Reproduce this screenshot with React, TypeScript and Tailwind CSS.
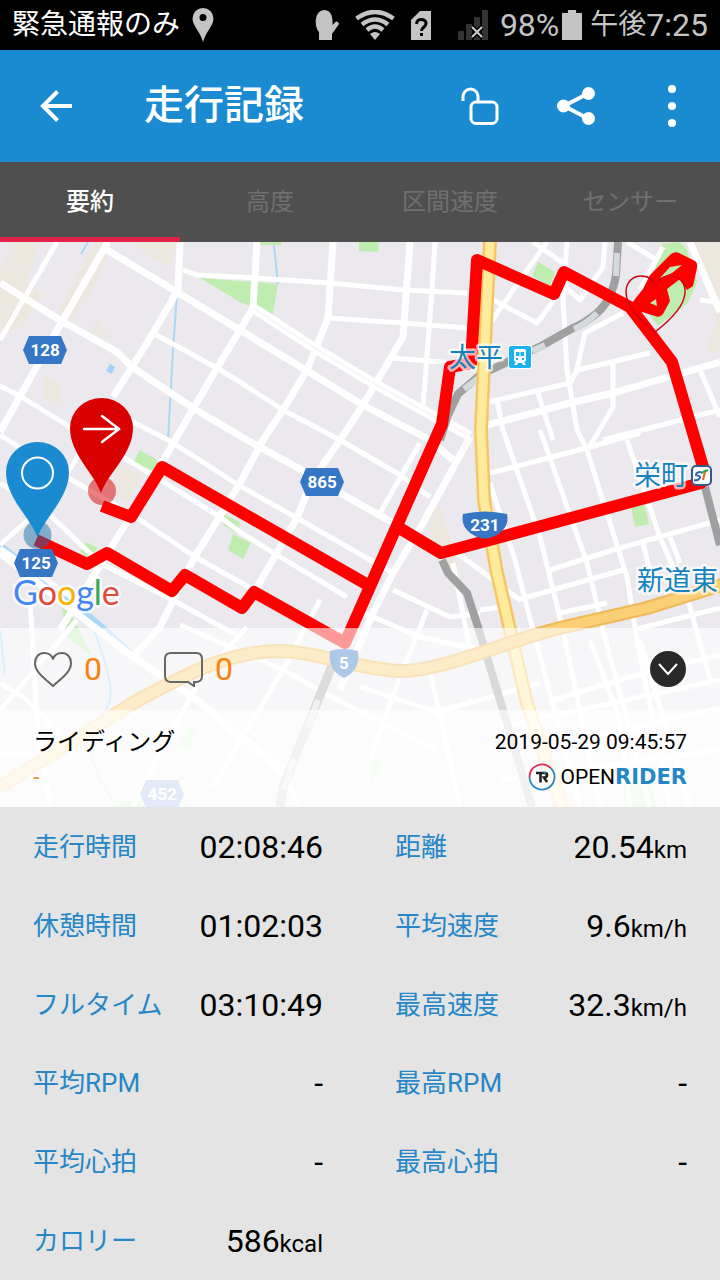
import type { ReactNode } from "react";

const minorRoads = [
  "M57 242L0 340", "M153 333L217 368L240 382L283 410L340 440L400 475L430 497",
  "M183 270L197 275L240 277L330 283L403 290L467 293", "M328 318L403 323L480 329", "M393 358L453 363",
  "M435 242L432 290L423 407", "M100 398L133 422L170 441L240 486L297 518L393 573",
  "M0 386L20 396L70 427L133 463L220 517L240 532L277 555L347 597", "M0 435L67 477L137 518L197 558L240 582L300 616",
  "M0 483L50 515L100 563L167 597L240 637", "M80 453L50 500L0 545", "M0 548L84 606",
  "M30 600L37 720L50 807", "M0 710L77 620", "M180 625L283 670L360 712L437 750", "M320 600L283 670L253 720L213 787",
  "M247 627L200 680L160 753L133 807", "M0 683L27 700L60 735", "M0 755L60 752L110 720", "M196 700L283 775L300 807",
  "M533 242L563 263", "M567 242L563 300L567 370L577 430L587 450L627 577L637 640L670 807",
  "M605 242L603 267L580 300L565 287", "M547 242L490 323", "M480 293L537 323L567 283", "M627 242L657 260",
  "M663 247L640 290", "M720 303L700 300", "M623 313L585 333L576 373", "M480 404L570 383L577 370L650 353",
  "M613 363L613 407L590 446", "M537 390L553 440", "M540 430L587 563L603 630L650 807", "M497 400L503 430L540 537L563 630L600 807",
  "M603 440L720 410", "M700 370L720 417", "M490 473L560 455L590 447L640 433", "M627 440L660 537L690 607L710 680",
  "M550 570L613 550L720 520", "M517 600L623 570", "M490 483L515 560L533 630L580 807", "M560 613L607 603",
  "M643 542L653 587", "M670 537L680 563", "M480 570L520 600", "M480 610L500 607", "M633 630L720 608",
  "M420 443L380 513", "M393 590L450 617L480 613", "M427 610L395 690L370 760", "M453 563L470 650", "M457 553L480 570",
  "M357 610L420 637L480 650", "M360 687L437 712L540 683", "M430 672L450 760L460 807", "M553 700L630 677L720 655",
  "M500 727L580 710L720 680", "M540 750L720 708", "M500 780L560 772L720 750", "M590 640L620 720L630 807", "M640 640L690 807",
];

const mainRoads = [
  "M108 242L60 325L0 432", "M0 283L63 322L117 352L132 367L193 408L240 436L300 469L340 493L397 525",
  "M107 250L177 292L243 332L363 405L430 440L453 460", "M180 242L178 290L153 333L132 367L113 397",
  "M257 242L253 308L240 330L217 368L175 440L147 490L120 533L60 630",
  "M333 242L328 318L307 370L283 410L263 440L240 483L193 560L160 627L133 657",
  "M410 242L403 337L363 405L340 440L312 480L297 518L257 587", "M690 242L720 312",
  "M480 427L570 403L613 393L720 362", "M0 553L80 616L133 657L167 680L197 700L283 770",
  "M470 437L423 523L393 573L373 613L340 690",
];

const greens = [
  "M200 278L240 281L278 284L273 314L252 307L240 302Z", "M260 242h21v3h-21z", "M359 242h20l-1 10l-19 -1z",
  "M140 450l10 6l6 3l4 14l-27 -10z", "M233 534l18 9l-8 16l-15 -9z", "M86 542l12 6l-9 10l-9 -6z", "M224 514l16 8l-2 12l-15 -9z",
  "M631 506l13 -4l5 22l-14 3z", "M538 262l17 10l-5 14l-18 -10z", "M662 244L680 242L687 250L697 282L688 303L658 326L644 308Z",
  "M62 608l8 4l22 44l-24 -18z", "M190 724l6 4l-6 22l-12 -4z", "M370 762l14 -4l-12 26z", "M622 780h28l6 27h-30z", "M120 802l20 -2l4 7h-26z",
];

const beige = [
  "M95 242h18l-22 50l-24 34l-8 -14z", "M130 242h48l-10 26z", "M0 270l15 -28h26l-16 40l18 12l-20 32l-22 8z", "M98 318l10 20l-18 -4z",
  "M45 374l15 12l2 20l-18 -8z", "M118 462l24 14l-14 26l-16 -10z", "M694 242h26v110h-14l10 -30z", "M430 512l10 -4l12 34l6 24l-14 12l-4 -20l-10 -30z",
];

function Hexagon({ x, y, label }: { x: number; y: number; label: string }) {
  return (
    <g transform={`translate(${x} ${y})`}>
      <path d="M-16 -14H16L22 0L16 14H-16L-22 0Z" fill="#3576c5" />
      <text y="6" textAnchor="middle" fill="#fff" fontSize="17" fontWeight="700">{label}</text>
    </g>
  );
}

function PlaceLabel({ x, y, children }: { x: number; y: number; children: string }) {
  return (
    <text x={x} y={y} fontSize="27" fill="#1583bd" stroke="#fff" strokeOpacity="0.7" strokeWidth="5" strokeLinejoin="round" paintOrder="stroke">
      {children}
    </text>
  );
}

function RouteMap() {
  return (
    <svg viewBox="0 242 720 565" preserveAspectRatio="xMidYMid slice" role="img" aria-label="地図" className="col-start-1 row-start-1 block w-full font-[Roboto,'Noto_Sans_CJK_JP',sans-serif]">
      <rect x="0" y="242" width="720" height="565" fill="#ebe9ed" />
      {beige.map((d) => <path key={d} d={d} fill="#ece8df" />)}
      {greens.map((d) => <path key={d} d={d} fill="#bfedb0" />)}
      <path d="M110 364l5 3l-3 7l-6 -3z" fill="#a1d3fb" />
      <g fill="none" stroke="#a9d8f7">
        <path d="M177 294L173 350L168 440M274 245L278 284M88 242l-7 12" strokeWidth="2" />
        <path d="M0 545L40 576L100 625L130 652" strokeWidth="6" />
        <path d="M130 652L170 682L220 718L260 743M90 620Q118 690 108 705L90 747Q92 770 113 800M0 630L5 674" strokeWidth="2" />
      </g>
      <g fill="none" stroke="#fff" strokeLinejoin="round">
        {minorRoads.map((d) => <path key={d} d={d} strokeWidth="5" />)}
        {mainRoads.map((d) => <path key={d} d={d} strokeWidth="7" />)}
        <path d="M253 308L313 347L373 383L470 436" strokeWidth="10" />
      </g>
      <path d="M253 308L313 347L373 383L470 436" fill="none" stroke="#f0eef2" strokeWidth="1" />

      <g fill="none" strokeLinejoin="round">
        <path d="M618 242L616 275Q612 300 597 313Q585 323 573 328L543 345L480 375L458 394L448 415L440 440M442 560L448 573L467 593L478 627L503 710L532 807M705 487L720 545" stroke="#9fa1a1" strokeWidth="8" />
        <path d="M333 663L310 720L283 787L280 807" stroke="#a7a9a9" strokeWidth="9" />
        <path d="M617 253L616 276M597 313Q587 323 574 329M545 345L532 351M480 377L464 389M318 700L308 727M294 759L283 790" stroke="#d5dadd" strokeWidth="6" />
      </g>
      <g fill="none" strokeLinejoin="round">
        <path d="M490 242L487 300L481 430L484 500L497 573L510 630L527 703L562 807" stroke="#f7c566" strokeWidth="14" />
        <path d="M490 242L487 300L481 430L484 500L497 573L510 630L527 703L562 807" stroke="#ffeb9c" strokeWidth="9" />
        <path d="M0 787L133 703C190 672 230 651 280 651C320 652 350 668 400 671C440 672 500 643 560 628L647 608L725 584" stroke="#efb958" strokeWidth="14" />
        <path d="M0 787L133 703C190 672 230 651 280 651C320 652 350 668 400 671C440 672 500 643 560 628L647 608L725 584" stroke="#fbcf76" strokeWidth="10" />
      </g>

      <g fill="none" stroke="#f00" strokeWidth="12" strokeLinejoin="round">
        <path d="M36 540L87 564L107 553L172 591L185 575L242 608L254 592L345 643L442 424L450 367L471 363L477 260L554 294L564 272L630 307L672 362L706 477L701 483L441 553L401 529" />
        <path d="M102 506L131 517L162 467L368 585" />
      </g>
      <path fill="#f00" fillRule="evenodd" d="M628 310L635 299L643 289L650 275L671 254Q675 251 679 253L695 261Q698 263 697 268L693 286L687 290L680 279L667 289L670 301L663 314Q660 318 655 316L642 312L634 313ZM650 303L657 306L656 299ZM660 278L672 273L682 265L670 267Z" />
      <path d="M655 332C643 322 626 308 626 292C626 282 633 276 641 276C649 276 655 281 656 286C657 281 663 276 670 276C679 276 686 283 685 293C684 308 668 322 655 332Z" fill="none" stroke="#d40012" strokeWidth="1.5" />

      <PlaceLabel x={449} y={367}>太平</PlaceLabel>
      <PlaceLabel x={634} y={485}>栄町</PlaceLabel>
      <PlaceLabel x={637} y={590}>新道東</PlaceLabel>
      <g transform="translate(509 346)">
        <rect x="-1" y="-1" width="24" height="24" rx="3" fill="#fff" />
        <rect width="22" height="22" rx="2" fill="#19b1ef" />
        <path d="M7 3H15Q17 3 17 5V14Q17 16 15 16L17 19H14L13 17H9L8 19H5L7 16Q5 16 5 14V5Q5 3 7 3Z" fill="#fff" />
        <path d="M7 6h3.500v4H7zM11.500 6H15v4h-3.500zM7 12h2v2H7zM13 12h2v2h-2z" fill="#19b1ef" />
      </g>
      <g transform="translate(691 465)">
        <rect x="1" y="1" width="19" height="19" rx="4" fill="#fff" stroke="#3c5688" strokeWidth="2" />
        <path d="M10 7Q5 7 5 10Q10 11 9 13Q7 16 3 15" fill="none" stroke="#3465b0" strokeWidth="2" />
        <path d="M10 8L17 5" stroke="#2ba24a" strokeWidth="2" />
        <path d="M14 7L12 15" stroke="#e36a22" strokeWidth="2" />
      </g>

      <Hexagon x={45} y={350} label="128" />
      <Hexagon x={322} y={482} label="865" />
      <Hexagon x={162} y={794} label="452" />
      <g fill="#3576c5">
        <path d="M463 514Q485 509 507 514Q510 528 495 536Q485 541 475 536Q460 528 463 514Z" />
        <path d="M330 651Q344 647 358 651Q361 670 344 678Q327 670 330 651Z" />
      </g>
      <g fill="#fff" fontSize="17" fontWeight="700" textAnchor="middle">
        <text x="485" y="531">231</text>
        <text x="344" y="669">5</text>
      </g>

      <circle cx="102" cy="491" r="14" fill="#d90000" fillOpacity="0.5" />
      <path d="M101 493C94 473 70 454 70 428A31.500 30 0 0 1 133 428C133 454 108 473 101 493Z" fill="#d90000" />
      <path d="M84 429H119M102 416L119 429L102 442" fill="none" stroke="#fff" strokeWidth="2.500" strokeLinecap="round" />
      <circle cx="37.500" cy="535" r="14" fill="#1a6fa8" fillOpacity="0.5" />
      <path d="M37.500 537C30 517 6 498 6 472A31.500 30 0 0 1 69 472C69 498 45 517 37.500 537Z" fill="#1a8bd0" />
      <circle cx="37.500" cy="473" r="15.500" fill="none" stroke="#fff" strokeWidth="2" />
      <Hexagon x={36} y={563} label="125" />
      <text x="13" y="605" fontSize="34" stroke="#fff" strokeOpacity="0.7" strokeWidth="5" strokeLinejoin="round" paintOrder="stroke" className="font-[Lato,sans-serif]">
        <tspan fill="#4285f4">G</tspan><tspan fill="#dd4b3e">o</tspan><tspan fill="#f4b400">o</tspan><tspan fill="#4285f4">g</tspan><tspan fill="#34a853">l</tspan><tspan fill="#dd4b3e">e</tspan>
      </text>
    </svg>
  );
}

function StatusBar() {
  return (
    <div className="flex h-[50px] items-center bg-black px-3 text-[28px] text-[#c4c4c4]">
      <span className="text-white">緊急通報のみ</span>
      <svg viewBox="0 0 22 34" className="ml-3 h-[34px] w-[22px]" aria-hidden="true">
        <path fillRule="evenodd" fill="currentColor" d="M11 0A10.500 10.500 0 0 1 21.500 10.500C21.500 18 14 23 11 34C8 23 .5 18 .5 10.500A10.500 10.500 0 0 1 11 0ZM11 6a3.500 3.500 0 1 0 0 7a3.500 3.500 0 0 0 0-7Z" />
      </svg>
      <div className="ml-auto flex items-center">
        <svg viewBox="0 0 24 30" className="h-[30px] w-6" aria-hidden="true">
          <path fill="currentColor" d="M4 30V22C-1 17 -1 1 9 0C16 0 18 6 17.500 15L21 11.500Q24 12 24 14L17 24V30Z" />
        </svg>
        <svg viewBox="0 0 40 30" className="ml-4 h-[30px] w-10" aria-hidden="true">
          <g fill="none" stroke="currentColor" strokeWidth="4.500">
            <path d="M1.500 8.500Q20 -4.500 38.500 8.500" />
            <path d="M7 14.500Q20 4.500 33 14.500" />
            <path d="M12 20Q20 13 28 20" />
          </g>
          <path d="M15 24Q20 20 25 24L20 30Z" fill="currentColor" />
        </svg>
        <svg viewBox="0 0 20 29" className="ml-4 h-[29px] w-5" aria-hidden="true">
          <path d="M9 0H20V29H0V9Z" fill="currentColor" />
          <path d="M5.500 13Q6 8.500 10 8.500Q15 8.500 15 12.500Q15 14.500 12.500 16.500Q10.500 18 10.500 20M10.500 22V25" fill="none" stroke="#000" strokeWidth="3" />
        </svg>
        <svg viewBox="0 0 30 30" className="ml-[27px] h-[30px] w-[30px]" aria-hidden="true">
          <path d="M0 21h6v9H0zM8 14h6v16H8zM16 7h6v23h-6zM24 0h6v30h-6z" fill="#333" />
          <path d="M14 17L24 27M24 17L14 27" stroke="#000" strokeWidth="5" />
          <path d="M14 17L24 27M24 17L14 27" stroke="#ccc" strokeWidth="2" />
        </svg>
        <span className="ml-3 text-[32px]">98%</span>
        <svg viewBox="0 0 20 30" className="ml-[3px] h-[30px] w-5" aria-hidden="true">
          <path d="M6 0h8v3h6v27H0V3h6z" fill="currentColor" />
        </svg>
        <span className="ml-2 flex items-center">午後<span className="text-[32px]">7:25</span></span>
      </div>
    </div>
  );
}

function IconButton({ label, children }: { label: string; children: ReactNode }) {
  return (
    <button type="button" aria-label={label} className="flex h-full w-24 items-center justify-center">
      {children}
    </button>
  );
}

function AppBar() {
  return (
    <header className="flex h-28 items-center bg-[#1a8bd0] text-white">
      <button type="button" aria-label="戻る" className="flex h-full w-28 items-center justify-center">
        <svg viewBox="0 0 32 32" className="size-8" fill="none" stroke="currentColor" strokeWidth="4" aria-hidden="true">
          <path d="M32 16H3M17.500 1.500L3 16L17.500 30.500" />
        </svg>
      </button>
      <h1 className="ml-8 flex-1 text-[40px] leading-none font-medium">走行記録</h1>
      <IconButton label="ロック解除">
        <svg viewBox="0 0 38 38" className="size-[38px]" fill="none" stroke="currentColor" strokeWidth="3" aria-hidden="true">
          <path d="M2 14V9.500A7.500 7.500 0 0 1 17 9.500V15" />
          <rect x="10" y="15" width="26" height="21.500" rx="5" />
        </svg>
      </IconButton>
      <IconButton label="共有">
        <svg viewBox="0 0 38 38" className="size-[38px]" fill="currentColor" aria-hidden="true">
          <path d="M31 6.500L7 19L31 31.500" fill="none" stroke="currentColor" strokeWidth="4" />
          <circle cx="6.500" cy="19" r="6.500" /><circle cx="31.500" cy="6.500" r="6.500" /><circle cx="31.500" cy="31.500" r="6.500" />
        </svg>
      </IconButton>
      <IconButton label="メニュー">
        <svg viewBox="0 0 8 42" className="h-[42px] w-2" fill="currentColor" aria-hidden="true">
          <circle cx="4" cy="4" r="4" /><circle cx="4" cy="21" r="4" /><circle cx="4" cy="38" r="4" />
        </svg>
      </IconButton>
    </header>
  );
}

function Tabs() {
  return (
    <nav role="tablist" className="grid h-20 grid-cols-4 bg-[#4f4f4f] text-2xl leading-none text-[#707070]">
      <button role="tab" aria-selected="true" type="button" className="border-b-5 border-[#e02247] pt-[5px] font-medium text-white">要約</button>
      {["高度", "区間速度", "センサー"].map((t) => (
        <button key={t} role="tab" aria-selected="false" type="button">{t}</button>
      ))}
    </nav>
  );
}

function RideInfo() {
  return (
    <div className="z-10 col-start-1 row-start-1 self-end">
      <div className="flex h-[82px] items-center bg-white/60 px-[34px] text-[32px] text-[#f5830f]">
        <button type="button" className="flex items-center gap-3">
          <svg viewBox="0 0 38 35" className="h-[35px] w-[38px]" fill="none" stroke="#666" strokeWidth="2" strokeLinejoin="round" aria-label="いいね">
            <path d="M19 34C10 26 1 20 1 11C1 5 5 1 10 1C15 1 18 4 19 7C20 4 23 1 28 1C33 1 37 5 37 11C37 20 28 26 19 34Z" />
          </svg>
          <span>0</span>
        </button>
        <button type="button" className="ml-[62px] flex items-center gap-3">
          <svg viewBox="0 0 39 35" className="h-[35px] w-[39px]" fill="none" stroke="#666" strokeWidth="2" aria-label="コメント">
            <path d="M7 1H32Q38 1 38 7V24Q38 30 32 30H30V34L24 30H7Q1 30 1 24V7Q1 1 7 1Z" />
          </svg>
          <span>0</span>
        </button>
        <button type="button" aria-label="閉じる" className="ml-auto flex size-9 items-center justify-center rounded-full bg-[#292929]">
          <svg viewBox="0 0 20 12" className="h-3 w-5" fill="none" stroke="#fff" strokeWidth="2" aria-hidden="true"><path d="M1 1L10 11L19 1" /></svg>
        </button>
      </div>
      <div className="flex h-[97px] justify-between bg-white/85 px-[33px] py-4 text-black">
        <div>
          <p className="text-2xl leading-8">ライディング</p>
          <p className="mt-1 text-2xl leading-[30px] text-[#f0963c]">-</p>
        </div>
        <div className="flex flex-col items-end">
          <time dateTime="2019-05-29T09:45:57" className="text-[21px] leading-8">2019-05-29 09:45:57</time>
          <div className="mt-1 flex items-center text-[21px] leading-[30px]">
            <svg viewBox="0 0 28 28" className="mr-1 size-7" fill="none" aria-hidden="true">
              <path d="M1.500 14A12.500 12.500 0 0 1 22.800 5.200" stroke="#e02b52" strokeWidth="1.800" />
              <path d="M22.800 5.200A12.500 12.500 0 1 1 1.500 14" stroke="#2587c4" strokeWidth="1.800" />
              <path d="M8 10H17Q19 10 19 12Q19 14.500 16 14.500L19 19" stroke="#222" strokeWidth="2.600" />
              <path d="M12.500 10V19.500" stroke="#222" strokeWidth="2.600" />
              <path d="M15 9L18 10" stroke="#2587c4" strokeWidth="1.500" />
            </svg>
            <span>OPEN</span>
            <span className="font-['DejaVu_Sans'] font-bold text-[#2587c4]">RIDER</span>
          </div>
        </div>
      </div>
    </div>
  );
}

const stats = [
  ["走行時間", "02:08:46", ""], ["距離", "20.54", "km"],
  ["休憩時間", "01:02:03", ""], ["平均速度", "9.6", "km/h"],
  ["フルタイム", "03:10:49", ""], ["最高速度", "32.3", "km/h"],
  ["平均RPM", "-", ""], ["最高RPM", "-", ""],
  ["平均心拍", "-", ""], ["最高心拍", "-", ""],
  ["カロリー", "586", "kcal"],
];

function Stats() {
  return (
    <dl className="grid flex-1 grid-cols-2 grid-rows-6 bg-[#e4e4e4]">
      {stats.map(([label, value, unit]) => (
        <div key={label} className="flex items-center justify-between pt-px odd:pr-[37px] odd:pl-[33px] even:pr-[33px] even:pl-[35px]">
          <dt className="text-[26px] leading-none text-[#2587c8]">{label}</dt>
          <dd className="text-[32px] leading-none text-black">{value}<span className="text-2xl leading-none">{unit}</span></dd>
        </div>
      ))}
    </dl>
  );
}

export default function App() {
  return (
    <main className="flex min-h-screen flex-col bg-[#e4e4e4] font-[Roboto,'Noto_Sans_CJK_JP',sans-serif]">
      <StatusBar />
      <AppBar />
      <Tabs />
      <section className="grid">
        <RouteMap />
        <RideInfo />
      </section>
      <Stats />
    </main>
  );
}
